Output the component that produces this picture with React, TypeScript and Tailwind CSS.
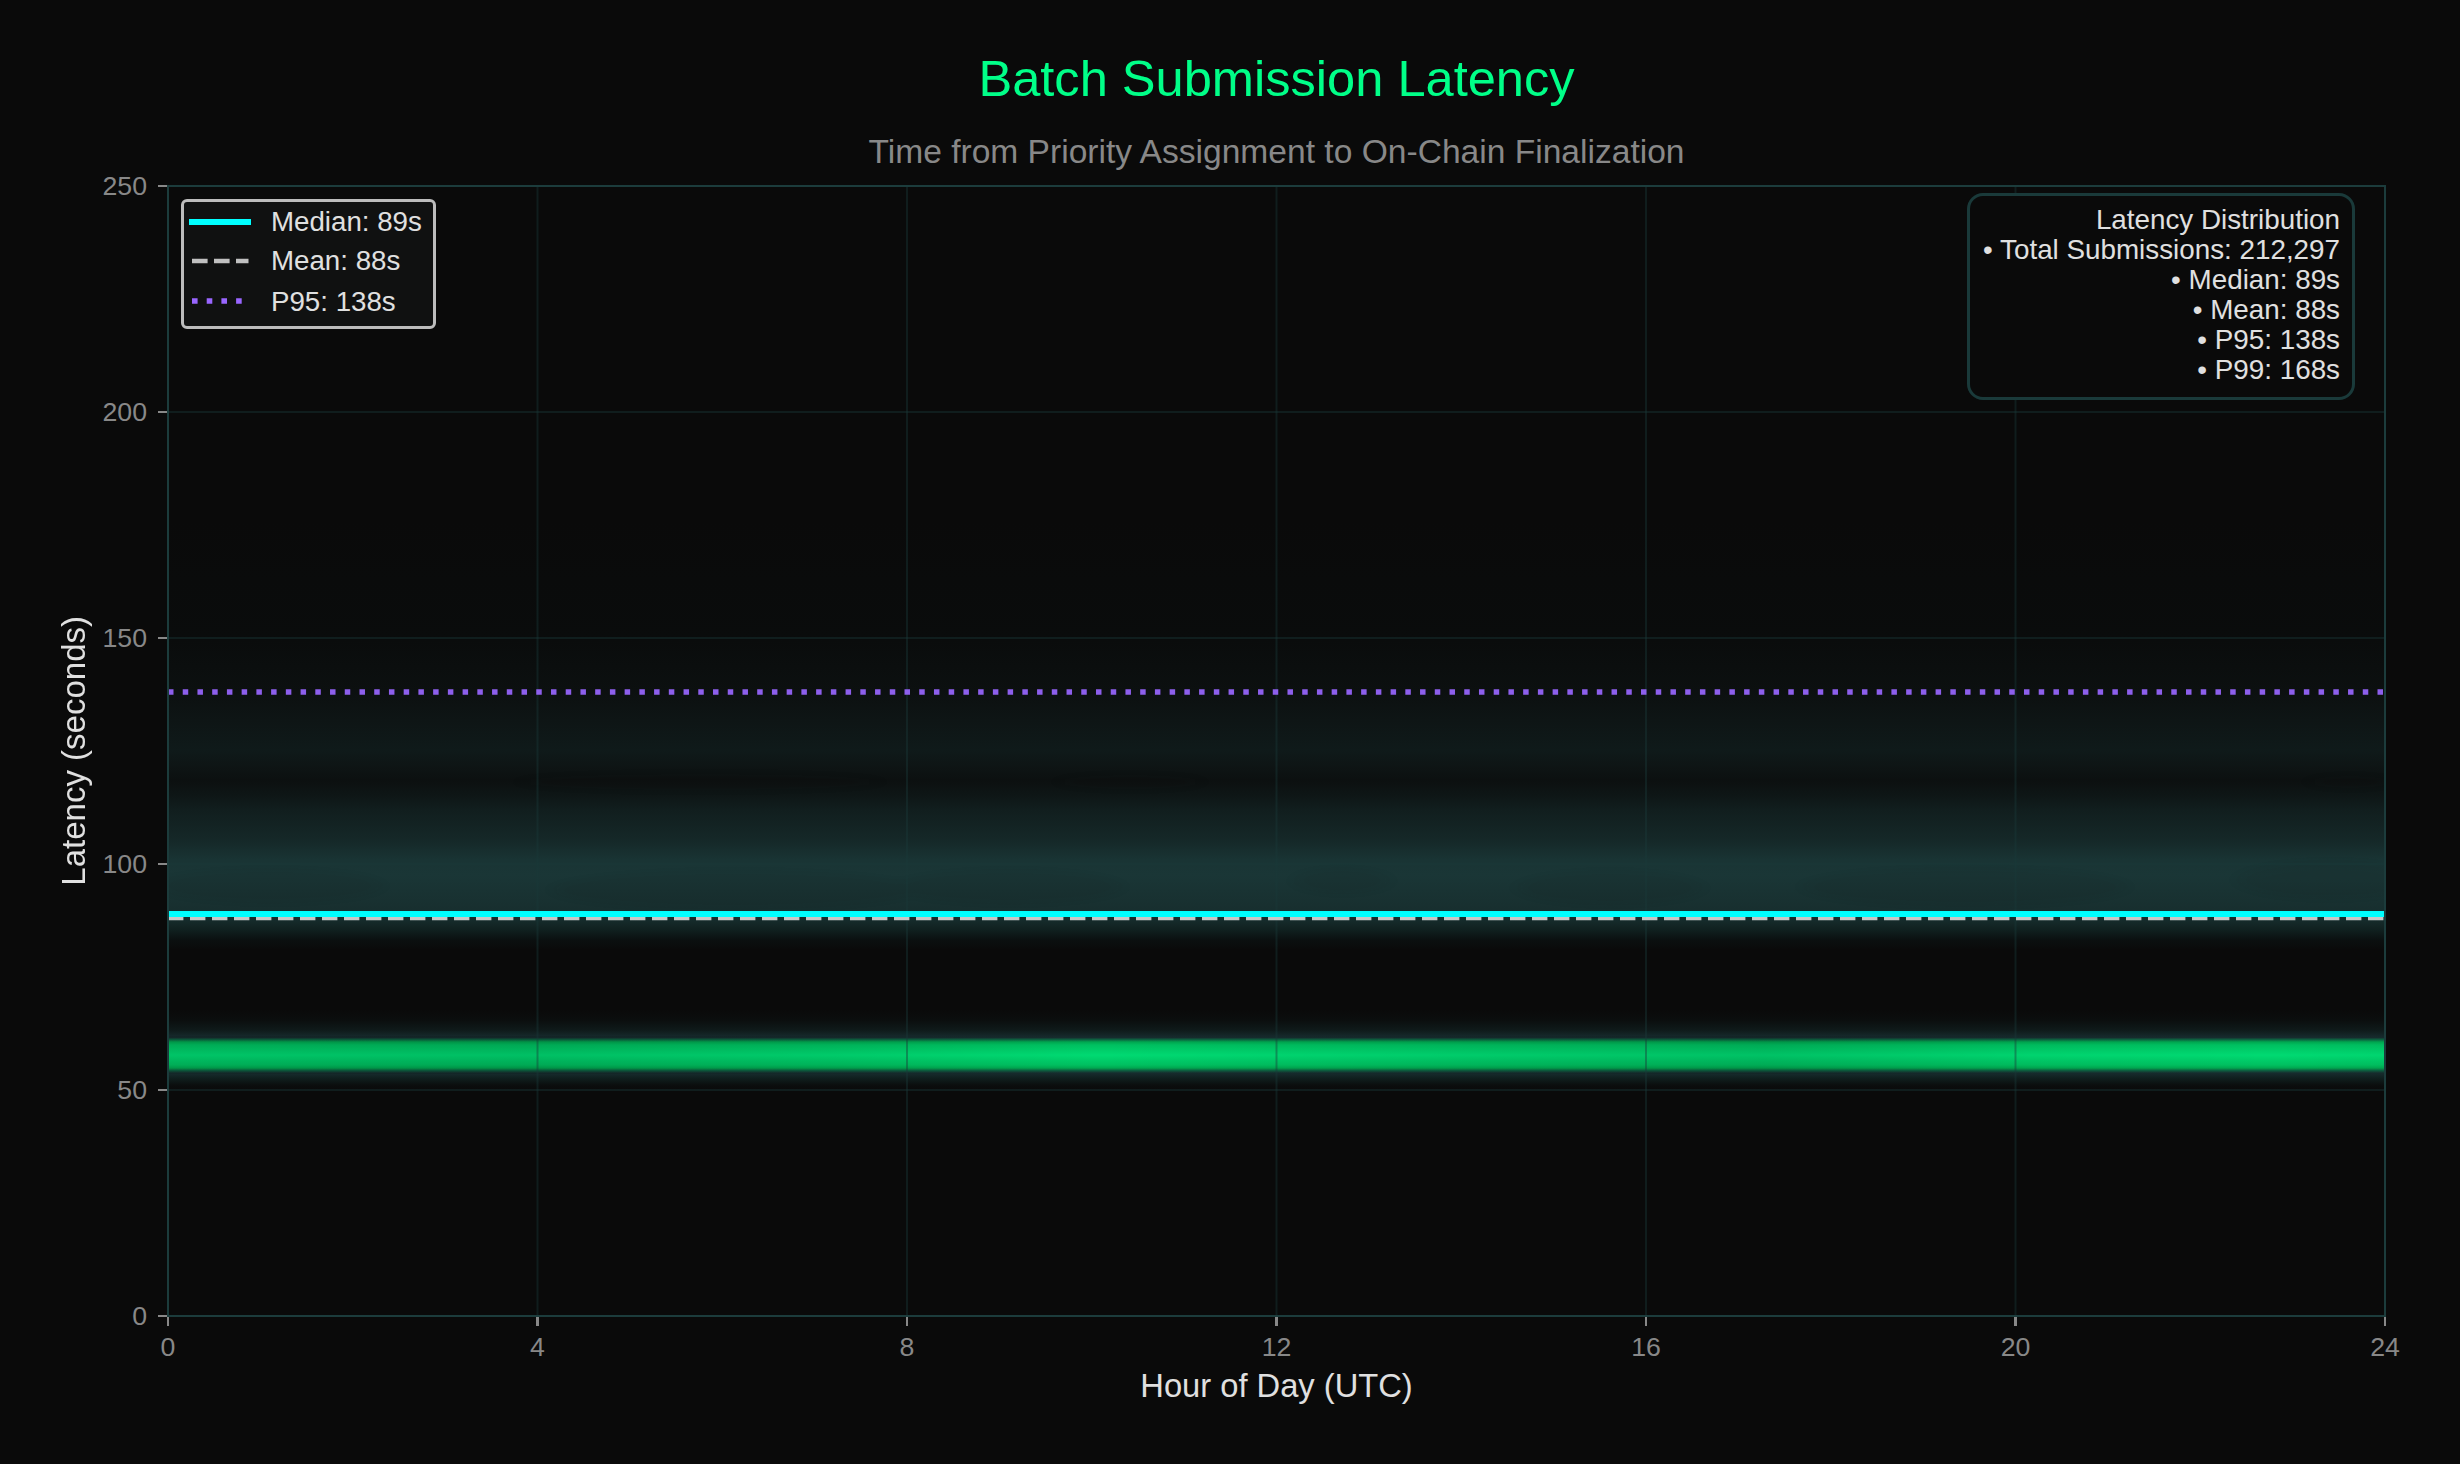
import React from "react";

const stops: [number, string][] = [
  [187, "#0a0a0a"], [520, "#0a0a0a"], [640, "#0a0c0c"], [692, "#0c1010"], [720, "#0e1515"],
  [750, "#0f1a1a"], [765, "#0e1515"], [780, "#0c1010"], [795, "#0e1616"], [810, "#111e1e"],
  [840, "#152828"], [860, "#193434"], [875, "#1a3636"], [905, "#183030"], [920, "#162c2c"],
  [930, "#10201f"], [940, "#0b1010"], [950, "#0a0a0a"], [1010, "#0a0a0a"], [1020, "#0b0e0e"],
  [1030, "#0f1a1a"], [1037.5, "#172c2e"], [1039.5, "#0d6040"], [1042, "#00a850"], [1045, "#00c060"],
  [1055, "#00da72"], [1065, "#00c060"], [1068, "#00a850"], [1070.5, "#0c6040"], [1073, "#172c2e"],
  [1078, "#10201f"], [1085, "#0b0e0e"], [1090, "#0a0a0a"], [1315, "#0a0a0a"],
];

const greenShade: [number, number][] = [
  [0, 0.1], [0.16, 0.12], [0.3, 0.07], [0.42, 0.0], [0.5, 0.03], [0.6, 0.07], [0.72, 0.11], [0.84, 0.03], [0.95, 0.0], [1, 0.02],
];

const blobs: [number, number, number, number][] = [
  [1342, 881, 45, 12], [735, 890, 180, 18], [1010, 887, 110, 16], [1610, 888, 90, 16], [1965, 887, 160, 18],
  [270, 886, 110, 16], [2330, 880, 90, 18], [700, 782, 180, 8], [1130, 782, 70, 7], [2350, 782, 40, 6],
];

const gridX = [537.5, 907, 1276.5, 1646, 2015.5];
const gridY = [412, 638, 864, 1090];
const yTicks = ["250", "200", "150", "100", "50", "0"];
const xTicks = ["0", "4", "8", "12", "16", "20", "24"];

function Heatmap() {
  return (
    <svg viewBox="169 187 2215 1128" className="block w-full h-full">
      <defs>
        <linearGradient id="band" x1="0" y1="0" x2="0" y2="1">
          {stops.map(([y, c]) => (
            <stop key={y} offset={(y - 187) / 1128} stopColor={c} />
          ))}
        </linearGradient>
        <linearGradient id="shade" x1="0" y1="0" x2="1" y2="0">
          {greenShade.map(([o, a]) => (
            <stop key={o} offset={o} stopColor="#000000" stopOpacity={a} />
          ))}
        </linearGradient>
        <filter id="soft" x="-50%" y="-100%" width="200%" height="300%">
          <feGaussianBlur stdDeviation="8 3" />
        </filter>
      </defs>
      <rect x="169" y="187" width="2215" height="1128" fill="url(#band)" />
      <rect x="169" y="1036" width="2215" height="38" fill="url(#shade)" />
      <g filter="url(#soft)" fill="#0a0a0a" opacity="0.07">
        {blobs.map(([cx, cy, rx, ry]) => (
          <ellipse key={cx + "-" + cy} cx={cx} cy={cy} rx={rx} ry={ry} />
        ))}
      </g>
      <g stroke="#1a3a3a" strokeOpacity="0.42" strokeWidth="2">
        {gridX.map((x) => (
          <line key={x} x1={x} x2={x} y1="187" y2="1315" />
        ))}
        {gridY.map((y) => (
          <line key={y} x1="169" x2="2384" y1={y} y2={y} />
        ))}
      </g>
      <line x1="168" x2="2384" y1="918.4" y2="918.4" stroke="#c8c8c8" strokeWidth="3.6" strokeDasharray="15.4 6.6" />
      <line x1="169" x2="2384" y1="914" y2="914" stroke="#00ffff" strokeWidth="6" />
      <line x1="168" x2="2384" y1="692" y2="692" stroke="#9966ff" strokeOpacity="0.92" strokeWidth="5.4" strokeDasharray="5.5 9.23" />
    </svg>
  );
}

function Legend() {
  return (
    <div className="absolute left-[12px] top-[12px] w-[255px] h-[130px] border-[3px] border-[#bcbcbc] rounded-[6px] bg-[#101111] pl-[5px] flex flex-col text-[27.7px] text-[#e0e0e0]">
      <div className="h-[39.5px] flex items-center gap-[20px]">
        <svg viewBox="0 0 62 8" className="w-[62px] h-[8px] shrink-0">
          <line x1="0" x2="62" y1="4" y2="4" stroke="#00ffff" strokeWidth="6" />
        </svg>
        <span>Median: 89s</span>
      </div>
      <div className="h-[39.5px] flex items-center gap-[20px]">
        <svg viewBox="0 0 62 8" className="w-[62px] h-[8px] shrink-0">
          <line x1="3" x2="59.5" y1="4" y2="4" stroke="#c0c0c0" strokeWidth="4.5" strokeDasharray="15.6 6.4" />
        </svg>
        <span>Mean: 88s</span>
      </div>
      <div className="h-[40px] flex items-center gap-[20px]">
        <svg viewBox="0 0 62 8" className="w-[62px] h-[8px] shrink-0">
          <line x1="3" x2="54" y1="4" y2="4" stroke="#9966ff" strokeWidth="5.4" strokeDasharray="5.6 9.1" />
        </svg>
        <span className="pt-[1px]">P95: 138s</span>
      </div>
    </div>
  );
}

function Stats() {
  return (
    <div className="absolute right-[29px] top-[6px] w-[388px] h-[207px] border-[3px] border-[#1a3a3a] rounded-[16px] bg-[#0a0a0a] pt-[9px] pr-[12px] text-right text-[27.8px] leading-[30px] text-[#e0e0e0]">
      <div>Latency Distribution</div>
      <div>• Total Submissions: 212,297</div>
      <div>• Median: 89s</div>
      <div>• Mean: 88s</div>
      <div>• P95: 138s</div>
      <div>• P99: 168s</div>
    </div>
  );
}

export default function App() {
  return (
    <div className="w-[2460px] h-[1464px] bg-[#0a0a0a] overflow-hidden grid grid-cols-[167px_2219px] grid-rows-[185px_1132px_1fr] [font-family:'Liberation_Sans',sans-serif]">
      <div className="col-start-2 flex flex-col items-center">
        <div className="mt-[51px] text-[50.6px] leading-[56px] text-[#00ff88]">Batch Submission Latency</div>
        <div className="mt-[25px] text-[33.6px] leading-[40px] text-[#888888]">Time from Priority Assignment to On-Chain Finalization</div>
      </div>

      <div className="col-start-1 row-start-2 flex">
        <div className="ml-[56px] w-[36px] flex items-center justify-center">
          <span className="[writing-mode:vertical-rl] rotate-180 text-[33px] leading-[36px] text-[#e0e0e0] whitespace-nowrap">Latency (seconds)</span>
        </div>
        <div className="flex-1 self-start h-[1160px] -mt-[14px] flex flex-col justify-between">
          {yTicks.map((t) => (
            <div key={t} className="h-[30px] flex items-center justify-end gap-[11px] text-[26.7px] text-[#888888]">
              <span>{t}</span>
              <span className="w-[9px] h-[2.5px] bg-[#888888]" />
            </div>
          ))}
        </div>
      </div>

      <div className="col-start-2 row-start-2 relative border-2 border-[#1c3c3c]">
        <Heatmap />
        <Legend />
        <Stats />
      </div>

      <div className="col-start-2 row-start-3 flex flex-col">
        <div className="-ml-[29px] w-[2277px] flex justify-between">
          {xTicks.map((t) => (
            <div key={t} className="w-[60px] flex flex-col items-center text-[26.7px] text-[#888888]">
              <span className="w-[2.5px] h-[9px] bg-[#888888]" />
              <span className="mt-[6px] leading-[30px]">{t}</span>
            </div>
          ))}
        </div>
        <div className="mt-[6px] text-center text-[32.7px] leading-[36px] text-[#e0e0e0]">Hour of Day (UTC)</div>
      </div>
    </div>
  );
}
